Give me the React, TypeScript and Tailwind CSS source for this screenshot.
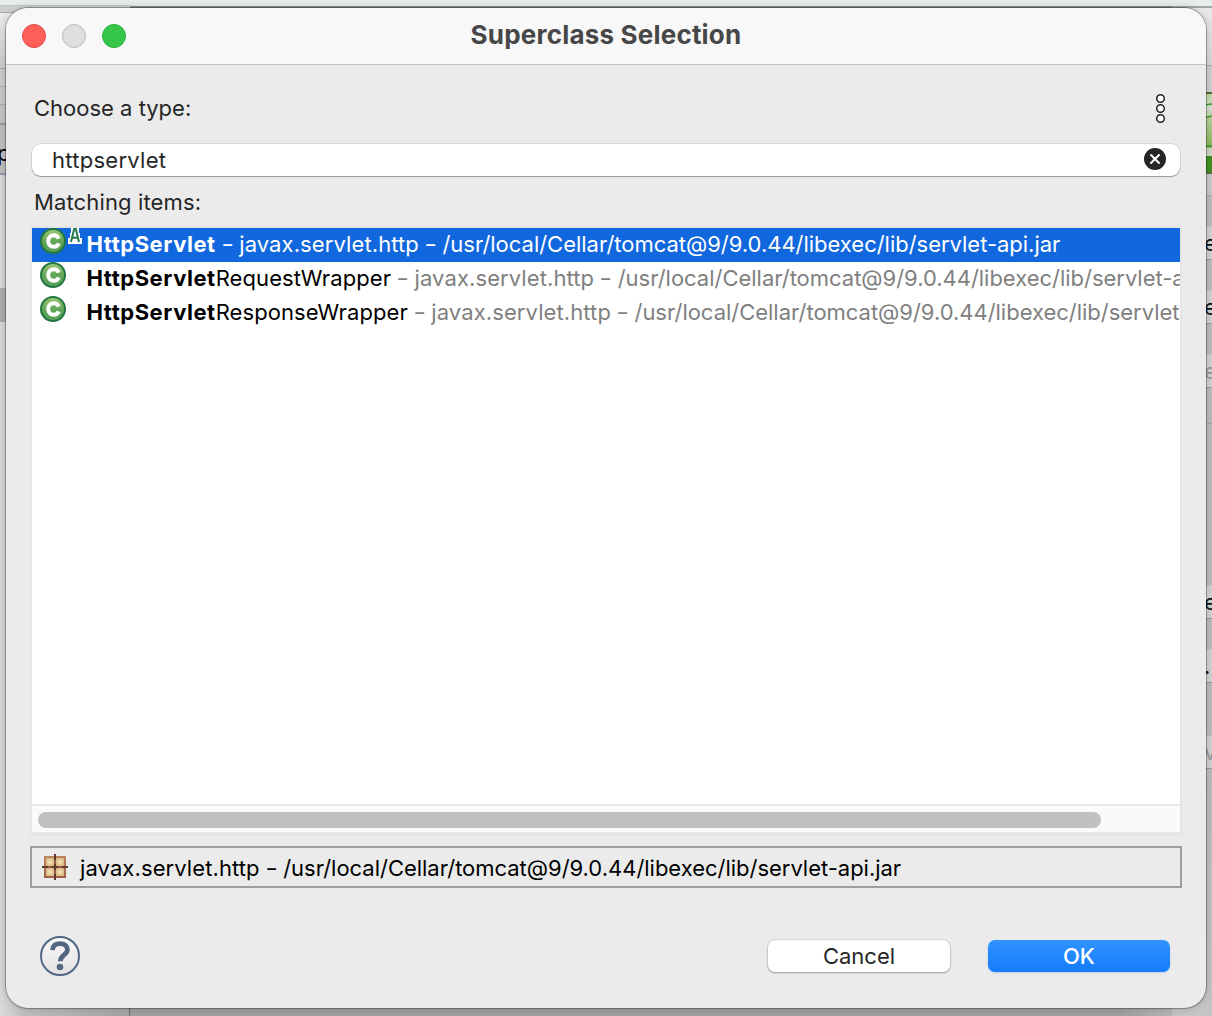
import React from 'react';

const PACKAGE = 'javax.servlet.http';
const JAR_PATH = '/usr/local/Cellar/tomcat@9/9.0.44/libexec/lib/servlet-api.jar';

function ClassIcon({ id }: { id: string }) {
  return (
    <svg width="26" height="26" viewBox="0 0 26 26" className="block shrink-0">
      <defs>
        <linearGradient id={id} x1="0" y1="0" x2="0" y2="1">
          <stop offset="0" stopColor="#a3ca74" />
          <stop offset="0.5" stopColor="#62a65a" />
          <stop offset="1" stopColor="#55a058" />
        </linearGradient>
      </defs>
      <circle cx="13" cy="13" r="12" fill={`url(#${id})`} stroke="#22783f" strokeWidth="2" />
      <path d="M18.700 10.600C17.900 8.400 16.200 7.200 13.700 7.200C10.400 7.200 8.200 9.500 8.200 13C8.200 16.500 10.400 18.800 13.700 18.800C16.200 18.800 18 17.600 18.700 15.400" fill="none" stroke="#fff" strokeWidth="4" />
    </svg>
  );
}

function AbstractBadge() {
  return (
    <svg width="14" height="16" viewBox="0 0 14 16" className="block shrink-0">
      <path d="M3 0H11V5H12V10H14V16H0V10H2V5H3Z" fill="#fff" />
      <path d="M3 14L6.300 0.500H7.700L11 14M4 9.800H10" fill="none" stroke="#217a4a" strokeWidth="2" />
    </svg>
  );
}

function PackageIcon() {
  return (
    <svg width="26" height="26" viewBox="0 0 26 26" className="block shrink-0">
      <defs>
        <linearGradient id="pkg-frame" x1="0" y1="0" x2="0" y2="1">
          <stop offset="0" stopColor="#c08560" />
          <stop offset="1" stopColor="#9c5f48" />
        </linearGradient>
        <radialGradient id="pkg-tile">
          <stop offset="0" stopColor="#f7e9bb" />
          <stop offset="1" stopColor="#dcb987" />
        </radialGradient>
      </defs>
      <rect x="2" y="2" width="22" height="22" fill="url(#pkg-frame)" />
      <rect x="4" y="4" width="8" height="8" fill="url(#pkg-tile)" />
      <rect x="14" y="4" width="8" height="8" fill="url(#pkg-tile)" />
      <rect x="4" y="14" width="8" height="8" fill="url(#pkg-tile)" />
      <rect x="14" y="14" width="8" height="8" fill="url(#pkg-tile)" />
      <rect x="12" y="2" width="2" height="22" fill="#915a45" />
      <rect x="2" y="12" width="22" height="2" fill="#915a45" />
      <path d="M13 0V6M13 10V16M13 20V26M0 13H6M10 13H16M20 13H26" stroke="#61372b" strokeWidth="2" />
    </svg>
  );
}

function LeftBackdrop() {
  return (
    <div className="flex w-[130px] flex-col bg-[#b8b8b8]">
      <div className="h-[6px] border-b border-[#c3c6c6] bg-[#e7ecec]" />
      <div className="h-[6px] bg-[#cfd1d1]" />
      <div className="h-[57px] border-b border-t border-b-[#a9a9a9] border-t-[#aaa] bg-gradient-to-b from-[#ececec] to-[#cacaca]" />
      <div className="h-[18px] border-b border-[#aeaeae] bg-[#cbcbcb]" />
      <div className="h-[18px] border-b border-[#aaa] bg-[#c9c9c9]" />
      <div className="h-[20px] border-b-2 border-[#999] bg-[#c3c3c3]" />
      <div className="h-[50px] overflow-hidden border-b-2 border-[#9699aa] bg-[#bebebe] pt-[12px] text-[22px] leading-[32px] text-black">
        <span className="-ml-[3px] block">p</span>
      </div>
      <div className="h-[113px] bg-gradient-to-r from-[#dedede] from-0% to-[#c8c8c8] to-5%" />
      <div className="h-[34px] bg-[#acacac]" />
      <div className="flex-1 border-r border-[#6f6f6f] bg-gradient-to-r from-[#d9d9d9] from-0% via-[#bdbdbd] via-20% to-[#a4a4a4]" />
    </div>
  );
}

function Sliver({ text, faint = false }: { text: string; faint?: boolean }) {
  return (
    <div className={'flex h-[34px] justify-end overflow-hidden border-y border-t-[#c5c5c5] border-b-[#999] bg-[#d2d2d2] ' + (faint ? 'text-[#999]' : 'text-[#111]')}>
      <span className="-mr-[6px] block w-[14px] text-[22px] leading-[32px]">{text}</span>
    </div>
  );
}

function RightBackdrop() {
  return (
    <div className="flex w-[40px] flex-col overflow-hidden bg-[#bcbcbc]">
      <div className="h-[8px] border-b-2 border-[#a2a5a5] bg-[#e7ecec]" />
      <div className="h-[57px] bg-gradient-to-b from-[#e9e9e9] to-[#d6d6d6]" />
      <div className="h-[27px] border-t border-[#aaa] bg-[#cfcfcf]" />
      <svg width="40" height="82" viewBox="0 0 40 82" className="block shrink-0">
        <defs>
          <linearGradient id="banner" x1="0" y1="0" x2="0" y2="1">
            <stop offset="0" stopColor="#bcd99d" />
            <stop offset="0.200" stopColor="#d5dfcc" />
            <stop offset="0.320" stopColor="#b9d099" />
            <stop offset="0.640" stopColor="#8aba62" />
          </linearGradient>
        </defs>
        <rect width="40" height="82" fill="url(#banner)" />
        <rect width="40" height="2" fill="#5c6b32" />
        <path d="M32 13L40 12M32 26L40 24M32 54H40" stroke="#3e982b" strokeWidth="1.600" />
        <rect y="56" width="40" height="9" fill="#cad8c2" />
        <rect y="64" width="40" height="18" fill="#419023" />
        <rect y="80" width="40" height="2" fill="#56703c" />
      </svg>
      <div className="h-[22px] border-b border-[#aaa] bg-[#c8c9cd]" />
      <div className="h-[30px]" />
      <Sliver text="e" />
      <div className="h-[30px]" />
      <Sliver text="e" />
      <div className="h-[30px]" />
      <Sliver text="e" faint />
      <div className="h-[36px] border-b border-[#a6a6a6]" />
      <div className="h-[161px]" />
      <Sliver text="e" />
      <div className="h-[30px]" />
      <Sliver text="." />
      <div className="h-[52px]" />
      <Sliver text="v" faint />
      <div className="flex-1 bg-gradient-to-b from-[#bcbcbc] to-[#c4c4c4]" />
    </div>
  );
}

function Location() {
  return (
    <>
      <span className="tracking-[0.1px]">{PACKAGE}</span>
      <Dash />
      <span className="tracking-[-0.020px]">{JAR_PATH}</span>
    </>
  );
}

function Dash() {
  return <span className="inline-block w-[23.5px] scale-x-[0.8] text-center">–</span>;
}

function Row({ name, rest = '', id, selected = false }: { name: string; rest?: string; id: string; selected?: boolean }) {
  return (
    <div className={'flex h-[34px] whitespace-nowrap pl-2 text-[22px] leading-[32px] ' + (selected ? 'bg-[#1168de] text-white' : 'text-black')}>
      <div className="flex w-[46.5px] shrink-0 gap-[2px]">
        <ClassIcon id={id} />
        {selected && <AbstractBadge />}
      </div>
      <span className="font-bold tracking-[0.550px]">{name}</span>
      {rest && <span className="tracking-[0.080px]">{rest}</span>}
      <span className={selected ? '' : 'text-[#808080]'}>
        <Dash />
        <Location />
      </span>
    </div>
  );
}

export default function App() {
  return (
    <div className="relative h-[1016px] w-[1212px] overflow-hidden font-['Inter','Liberation_Sans',sans-serif]">
      <div className="flex h-full bg-[#a0a0a0]">
        <LeftBackdrop />
        <div className="flex flex-1 flex-col justify-between">
          <div className="h-[8px] border-b-2 border-[#888] bg-[#e7ecec]" />
          <div className="h-[8px] bg-gradient-to-r from-[#9f9f9f] from-95% to-[#b4b4b4]" />
        </div>
        <RightBackdrop />
      </div>

      <main className="absolute left-[6px] top-[8px] flex h-[1000px] w-[1200px] flex-col overflow-hidden rounded-[22px] bg-[#ebebeb] text-[22px] text-[#262626] shadow-[0_0_0_1px_rgba(0,0,0,0.28),0_0_8px_rgba(0,0,0,0.2)]">
        <header className="grid h-[57px] shrink-0 grid-cols-[1fr_auto_1fr] items-center border-b border-[#c2c2c2] bg-[#f8f8f8] pl-4">
          <div className="flex gap-4">
            <span className="size-6 rounded-full border border-[#e14942] bg-[#fe5f58]" />
            <span className="size-6 rounded-full border border-[#bcbcbc] bg-[#dedede]" />
            <span className="size-6 rounded-full border border-[#2aad38] bg-[#35c749]" />
          </div>
          <h1 className="-ml-4 pb-[2px] text-[26px] font-bold leading-8 tracking-[0.2px] text-[#474747]">Superclass Selection</h1>
          <span />
        </header>

        <div className="mt-[27px] flex h-8 items-center justify-between pl-7 pr-[40px]">
          <label>Choose a type:</label>
          <svg width="11" height="30" viewBox="0 0 11 30" className="block">
            <g fill="#fff" stroke="#222" strokeWidth="1.500">
              <circle cx="5.500" cy="5.500" r="3.800" />
              <circle cx="5.500" cy="15.500" r="3.800" />
              <circle cx="5.500" cy="25.500" r="3.800" />
            </g>
          </svg>
        </div>

        <div className="ml-[26px] mt-5 flex h-[32px] w-[1148px] items-center justify-between rounded-[9px] bg-white pl-5 pr-[14px] shadow-[0_0_0_1px_rgba(0,0,0,0.08),0_1px_1px_rgba(0,0,0,0.3)]">
          <span className="tracking-[0.270px]">httpservlet</span>
          <svg width="22" height="22" viewBox="0 0 22 22" className="-mt-[2px] block">
            <circle cx="11" cy="11" r="11" fill="#262626" />
            <path d="M7 7L15 15M15 7L7 15" stroke="#fff" strokeWidth="2" strokeLinecap="round" />
          </svg>
        </div>

        <div className="mt-[10px] h-[32px] pl-7 leading-8 tracking-[0.130px]">Matching items:</div>

        <section className="ml-[24px] mt-[8px] flex h-[610px] w-[1152px] shrink-0 flex-col border-2 border-[#e5e5e5] bg-white">
          <div className="flex-1 overflow-hidden">
            <Row id="class-a" name="HttpServlet" selected />
            <Row id="class-b" name="HttpServlet" rest="RequestWrapper" />
            <Row id="class-c" name="HttpServlet" rest="ResponseWrapper" />
          </div>
          <div className="flex h-[30px] shrink-0 border-b-2 border-t-2 border-[#e8e8e8] bg-[#fafafa] pl-[6px] pt-[6px]">
            <div className="h-4 w-[1063px] rounded-full bg-[#c1c1c1]" />
          </div>
        </section>

        <div className="ml-[24px] mt-[10px] flex h-[42px] w-[1152px] shrink-0 items-center gap-3 border-2 border-[#9d9d9d] pl-[10px] text-black">
          <PackageIcon />
          <span className="whitespace-nowrap pt-[2px]">
            <Location />
          </span>
        </div>

        <footer className="mt-[48px] flex h-10 items-center pl-[34px] pr-9">
          <svg width="40" height="40" viewBox="0 0 40 40" className="mr-auto block">
            <defs>
              <linearGradient id="help-fill" x1="0" y1="0" x2="0" y2="1">
                <stop offset="0" stopColor="#f8f8f8" />
                <stop offset="1" stopColor="#e3e3e3" />
              </linearGradient>
            </defs>
            <circle cx="20" cy="20" r="19" fill="url(#help-fill)" stroke="#536783" strokeWidth="2" />
            <path d="M12.500 14.200C12.700 9.800 15.600 7.700 20.100 7.700C24.700 7.700 27.400 10 27.400 13.700C27.400 19 20.300 19 20.300 25.300" fill="none" stroke="#536783" strokeWidth="4.800" />
            <circle cx="20" cy="31" r="3.300" fill="#536783" />
          </svg>
          <button className="h-8 w-[182px] rounded-[7px] bg-white leading-8 shadow-[0_0_0_1px_rgba(0,0,0,0.07),0_1px_2px_rgba(0,0,0,0.3)]">Cancel</button>
          <button className="ml-[38px] h-8 w-[182px] rounded-[7px] bg-gradient-to-b from-[#3193ff] to-[#127bfe] font-medium leading-8 text-white shadow-[0_1px_2px_rgba(0,80,200,0.2)]">OK</button>
        </footer>
      </main>
    </div>
  );
}
